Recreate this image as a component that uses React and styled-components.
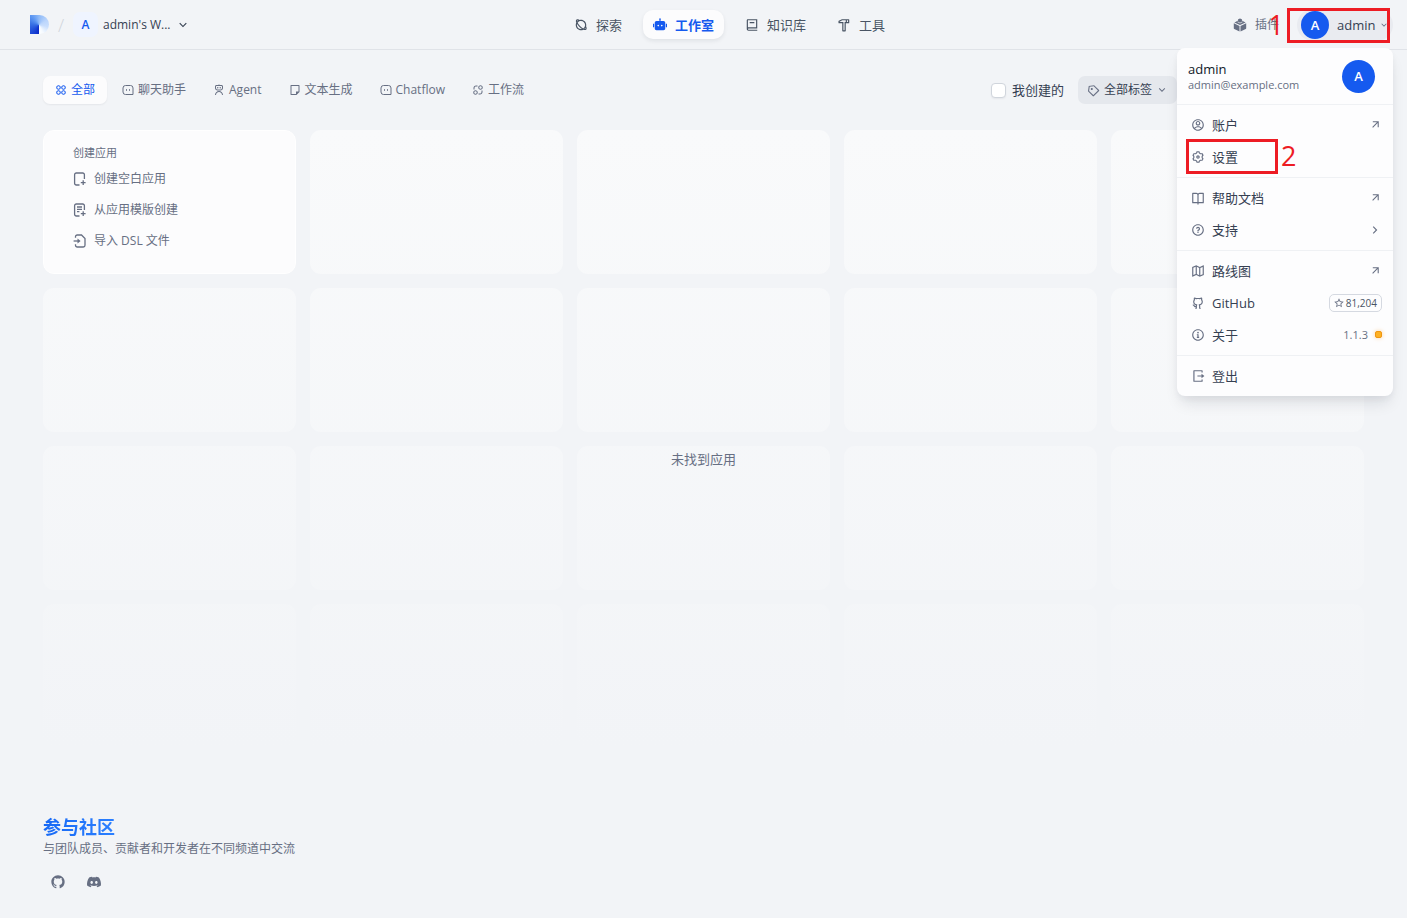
import React from "react";
import styled, { createGlobalStyle, css } from "styled-components";
import {
  RiPlanetLine,
  RiRobot2Fill,
  RiBook2Line,
  RiHammerLine,
  RiApps2Line,
  RiRobot3Line,
  RiFile4Line,
  RiExchange2Line,
  RiAccountCircleLine,
  RiSettings3Line,
  RiBookOpenLine,
  RiQuestionLine,
  RiMap2Line,
  RiGithubLine,
  RiInformation2Line,
  RiLogoutBoxRLine,
  RiArrowRightUpLine,
  RiArrowRightSLine,
  RiArrowDownSLine,
  RiStarLine,
  RiPriceTag3Line,
  RiGithubFill,
  RiDiscordFill,
} from "react-icons/ri";

const GlobalStyle = createGlobalStyle`
  *, *::before, *::after { box-sizing: border-box; }
  body {
    margin: 0;
    background: #f2f4f7;
    color: #354052;
    font-family: "Open Sans", "Noto Sans CJK SC", sans-serif;
    font-size: 13px;
    line-height: 20px;
  }
  button, input { font: inherit; color: inherit; }
  button { border: 0; background: none; padding: 0; cursor: pointer; white-space: nowrap; }
  a { color: inherit; text-decoration: none; }
  h1, h2, p, ul { margin: 0; padding: 0; }
  ul { list-style: none; }
  svg { display: block; flex: none; }
`;

const Page = styled.div`
  min-height: 100vh;
  display: flex;
  flex-direction: column;
`;

/* Header */
const Header = styled.header`
  display: flex;
  align-items: center;
  justify-content: space-between;
  height: 50px;
  padding: 0 14px 0 30px;
  border-bottom: 1px solid #e0e3e8;
`;

const HeaderStart = styled.div`
  display: flex;
  align-items: center;
  flex: 0 0 209px;
`;

const Logo = styled.span`
  width: 19px;
  height: 19px;
  border-radius: 0 10px 10px 0;
  background: conic-gradient(
    at 9px 10px,
    #8fbaf8 0deg,
    #bcd6fc 60deg,
    #c9defd 100deg,
    #f4f9ff 150deg,
    #ffffff 180deg,
    #0a2ac8 180deg,
    #1c47d6 220deg,
    #3b74e6 280deg,
    #5f98f2 320deg,
    #8fbaf8 360deg
  );
`;

const Slash = styled.span`
  width: 24px;
  text-align: center;
  font-size: 18px;
  font-weight: 300;
  color: #d0d5dc;
`;

const Workspace = styled.button`
  display: flex;
  align-items: center;
  gap: 5px;
  font-size: 12px;
`;

const WorkspaceMark = styled.span`
  width: 25px;
  height: 25px;
  border-radius: 7px;
  background: #eff4ff;
  color: #155aef;
  font-weight: 600;
  line-height: 25px;
`;

const Nav = styled.nav`
  display: flex;
  gap: 11px;
`;

const NavLink = styled.a`
  display: flex;
  align-items: center;
  gap: 8px;
  height: 29px;
  padding: 0 10px;
  border-radius: 10px;
  color: #495464;
  ${(p) =>
    p.$active &&
    css`
      background: #fcfcfd;
      color: #155aef;
      font-weight: 700;
      box-shadow: 0 2px 4px rgba(16, 24, 40, 0.08);
    `}
`;

const HeaderEnd = styled.div`
  display: flex;
  align-items: center;
  gap: 18px;
  padding-left: 13px;
`;

const PluginLink = styled.a`
  display: flex;
  align-items: center;
  gap: 8px;
  font-size: 12px;
  color: #676f83;
`;

const Account = styled.div`
  position: relative;
`;

const AccountButton = styled.button`
  display: flex;
  align-items: center;
  gap: 8px;
  height: 32px;
  width: 96px;
  padding: 0 4px;
  border-radius: 16px;
  background: #e9ebf0;

  svg {
    margin-left: -4px;
    color: #676f83;
  }
`;

const Avatar = styled.span`
  display: block;
  flex: none;
  width: ${(p) => p.$size}px;
  height: ${(p) => p.$size}px;
  border-radius: 50%;
  background: #155aef;
  color: #fff;
  font-size: 13px;
  font-weight: 600;
  line-height: ${(p) => p.$size}px;
  text-align: center;
`;

/* Account menu */
const Menu = styled.div`
  position: absolute;
  z-index: 10;
  top: 39px;
  right: 0;
  width: 216px;
  border-radius: 8px;
  background: #fdfdfe;
  box-shadow: 0 10px 16px -4px rgba(16, 24, 40, 0.12), 0 3px 6px rgba(16, 24, 40, 0.04);
`;

const Profile = styled.div`
  display: flex;
  align-items: center;
  justify-content: space-between;
  height: 56px;
  padding: 2px 18px 0 11px;
`;

const ProfileName = styled.p`
  line-height: 16px;
  color: #101828;
`;

const ProfileMail = styled.p`
  font-size: 11px;
  line-height: 16px;
  color: #676f83;
`;

const MenuGroup = styled.ul`
  padding: 4px;
  border-top: 1px solid #eff1f4;
`;

const MenuItem = styled.li`
  position: relative;
`;

const MenuLink = styled.a`
  display: flex;
  align-items: center;
  gap: 7px;
  height: 32px;
  padding: 0 7px 0 10px;
  color: #354052;

  svg { color: #676f83; }
`;

const MenuLabel = styled.span`
  flex: 1;
`;

const StarCount = styled.span`
  display: flex;
  align-items: center;
  gap: 2px;
  height: 18px;
  padding: 0 4px;
  border: 1px solid #d5d9e1;
  border-radius: 5px;
  font-size: 10px;
  color: #495464;
`;

const Version = styled.span`
  display: flex;
  align-items: center;
  gap: 7px;
  font-size: 11px;
  color: #676f83;

  &::after {
    content: "";
    width: 7px;
    height: 7px;
    border: 1px solid #f09510;
    border-radius: 2px;
    background: #fdb022;
    box-shadow: 0 0 4px rgba(247, 144, 9, 0.4);
  }
`;

/* Numbered callouts over the menu */
const Callout = styled.span`
  position: absolute;
  z-index: 11;
  top: ${(p) => p.$top}px;
  left: ${(p) => p.$left}px;
  width: ${(p) => p.$width}px;
  height: 35px;
  border: 3px solid #ed1c24;
  pointer-events: none;
`;

const CalloutNumber = styled.span`
  position: absolute;
  top: -4px;
  ${(p) => (p.$before ? "right" : "left")}: calc(100% + 6px);
  color: #ed1c24;
  font-size: 27px;
  line-height: 35px;
`;

/* Main area */
const Main = styled.main`
  padding: 26px 43px 0;
`;

const Toolbar = styled.div`
  display: flex;
  align-items: center;
  justify-content: space-between;
  height: 28px;
  margin-bottom: 26px;
`;

const Tabs = styled.div`
  display: flex;
  gap: 3px;
`;

const Tab = styled.button`
  display: flex;
  align-items: center;
  gap: 4px;
  height: 28px;
  padding: 0 12px;
  border-radius: 7px;
  font-size: 12px;
  color: #676f83;
  ${(p) =>
    p.$active &&
    css`
      background: #fcfcfd;
      color: #155aef;
      box-shadow: 0 1px 2px rgba(16, 24, 40, 0.06);
    `}
`;

const Filters = styled.div`
  display: flex;
  align-items: center;
  gap: 7px;
`;

const CheckLabel = styled.label`
  display: flex;
  align-items: center;
  gap: 6px;
  margin-right: 7px;
`;

const Checkbox = styled.input`
  appearance: none;
  width: 15px;
  height: 15px;
  margin: 0;
  border: 1px solid #d0d5dc;
  border-radius: 4px;
  background: #fff;
  box-shadow: 0 1px 2px rgba(16, 24, 40, 0.06);
`;

const TagButton = styled.button`
  display: flex;
  align-items: center;
  gap: 4px;
  height: 28px;
  width: 99px;
  padding: 0 9px;
  border-radius: 7px;
  background: #e5e8ed;
  font-size: 12px;

  svg { color: #676f83; }
`;

const TagIcon = styled(RiPriceTag3Line)`
  transform: scaleX(-1);
`;

const Search = styled.input`
  width: 180px;
  height: 28px;
  border: 0;
  border-radius: 7px;
  background: #e5e8ed;
`;

const Board = styled.section`
  position: relative;
  display: grid;
  grid-template-columns: repeat(5, 1fr);
  grid-auto-rows: 144px;
  gap: 14px;
`;

const EmptyCard = styled.div`
  border-radius: 11px;
  background: #f9fafb;
`;

const CreateCard = styled.div`
  position: relative;
  z-index: 2;
  display: flex;
  flex-direction: column;
  align-items: flex-start;
  gap: 1px;
  padding: 12px 29px;
  border: 1px solid #fff;
  border-radius: 11px;
  background: #fcfcfd;
  color: #676f83;
`;

const CreateTitle = styled.h2`
  font-size: 11px;
  font-weight: 400;
  line-height: 20px;
`;

const CreateButton = styled.button`
  display: flex;
  align-items: center;
  gap: 7px;
  height: 30px;
  font-size: 12px;
`;

const BoardFade = styled.div`
  position: absolute;
  z-index: 1;
  inset: 0;
  display: flex;
  align-items: center;
  justify-content: center;
  padding-top: 40px;
  background: linear-gradient(to bottom, rgba(242, 244, 247, 0), #f2f4f7);
  color: #676f83;
`;

/* Footer */
const Footer = styled.footer`
  margin-top: auto;
  padding: 0 43px 28px;
`;

const FooterTitle = styled.h2`
  width: max-content;
  font-size: 18px;
  font-weight: 700;
  line-height: 24px;
  background: linear-gradient(90deg, #1769f5, #2b7fff);
  background-clip: text;
  color: transparent;
`;

const FooterText = styled.p`
  font-size: 12px;
  color: #676f83;
`;

const Socials = styled.div`
  display: flex;
  gap: 20px;
  margin-top: 15px;
  padding-left: 7px;
  color: #676f83;
`;

function PluginIcon() {
  return (
    <svg width="14" height="14" viewBox="0 0 14 14" fill="currentColor" aria-hidden="true">
      <path d="M7 .4l1.900.9v1.300l2.200 1.100L12.600 4.400 7 7 1.400 4.400l1.500-.7 2.200-1.100V1.300z" />
      <path d="M.8 5.200l5.700 2.700v5.700L1.300 11a.9.9 0 0 1-.5-.8z" />
      <path d="M13.200 5.200L7.500 7.900v5.700L12.700 11a.9.9 0 0 0 .5-.8z" />
      <path d="M4.500 3.900L7 5l2.500-1.100" fill="none" stroke="#f2f4f7" strokeWidth=".7" />
    </svg>
  );
}

function ChatIcon() {
  return (
    <svg width="12" height="12" viewBox="0 0 12 12" fill="none" stroke="currentColor" aria-hidden="true">
      <path d="M3.500 1.500h5a2.500 2.500 0 0 1 2.500 2.500v6.500H3.500A2.500 2.500 0 0 1 1 8V4a2.500 2.500 0 0 1 2.500-2.500z" />
      <path d="M4.500 5.200v1.600M7.500 5.200v1.600" />
    </svg>
  );
}

function FileIcon({ kind }) {
  return (
    <svg width="14" height="14" viewBox="0 0 14 14" fill="none" stroke="currentColor" strokeWidth="1.300" aria-hidden="true">
      {kind === "import" ? (
        <>
          <path d="M2.500 3.800V2.700A1.700 1.700 0 0 1 4.200 1H8.500l3.500 3.500v6.800A1.700 1.700 0 0 1 10.300 13H4.200a1.700 1.700 0 0 1-1.700-1.700v-1.100" />
          <path d="M.6 7H5" />
          <path d="M4.500 4.500L7.600 7 4.500 9.500z" fill="currentColor" stroke="none" />
        </>
      ) : (
        <>
          <path d="M6.500 13H3.300a1.700 1.700 0 0 1-1.700-1.700V2.700A1.700 1.700 0 0 1 3.300 1h6.400a1.700 1.700 0 0 1 1.700 1.700V7" />
          <path d="M10.200 8.300v4.800M7.800 10.700h4.800" />
          {kind === "template" && <path d="M4 4h5M4 6.300h5M4 8.600h2.400" />}
        </>
      )}
    </svg>
  );
}

const navItems = [
  { label: "探索", icon: RiPlanetLine },
  { label: "工作室", icon: RiRobot2Fill, active: true },
  { label: "知识库", icon: RiBook2Line },
  { label: "工具", icon: RiHammerLine },
];

const tabs = [
  { label: "全部", icon: RiApps2Line, active: true },
  { label: "聊天助手", icon: ChatIcon },
  { label: "Agent", icon: RiRobot3Line },
  { label: "文本生成", icon: RiFile4Line },
  { label: "Chatflow", icon: ChatIcon },
  { label: "工作流", icon: RiExchange2Line },
];

const createItems = [
  { label: "创建空白应用", kind: "blank" },
  { label: "从应用模版创建", kind: "template" },
  { label: "导入 DSL 文件", kind: "import" },
];

const external = <RiArrowRightUpLine size={13} />;

const menuGroups = [
  [
    { label: "账户", icon: RiAccountCircleLine, end: external },
    { label: "设置", icon: RiSettings3Line, callout: "2" },
  ],
  [
    { label: "帮助文档", icon: RiBookOpenLine, end: external },
    { label: "支持", icon: RiQuestionLine, end: <RiArrowRightSLine size={14} /> },
  ],
  [
    { label: "路线图", icon: RiMap2Line, end: external },
    {
      label: "GitHub",
      icon: RiGithubLine,
      end: (
        <StarCount>
          <RiStarLine size={10} />
          81,204
        </StarCount>
      ),
    },
    { label: "关于", icon: RiInformation2Line, end: <Version>1.1.3</Version> },
  ],
  [{ label: "登出", icon: RiLogoutBoxRLine }],
];

function AccountMenu() {
  return (
    <Menu>
      <Profile>
        <div>
          <ProfileName>admin</ProfileName>
          <ProfileMail>admin@example.com</ProfileMail>
        </div>
        <Avatar $size={33}>A</Avatar>
      </Profile>
      {menuGroups.map((group) => (
        <MenuGroup key={group[0].label}>
          {group.map(({ label, icon: Icon, end, callout }) => (
            <MenuItem key={label}>
              <MenuLink href="#">
                <Icon size={14} />
                <MenuLabel>{label}</MenuLabel>
                {end}
              </MenuLink>
              {callout && (
                <Callout $top={-2} $left={5} $width={92}>
                  <CalloutNumber>{callout}</CalloutNumber>
                </Callout>
              )}
            </MenuItem>
          ))}
        </MenuGroup>
      ))}
    </Menu>
  );
}

export default function App() {
  return (
    <Page>
      <GlobalStyle />
      <Header>
        <HeaderStart>
          <Logo role="img" aria-label="Dify" />
          <Slash>/</Slash>
          <Workspace>
            <WorkspaceMark>A</WorkspaceMark>
            admin's W...
            <RiArrowDownSLine size={14} />
          </Workspace>
        </HeaderStart>
        <Nav>
          {navItems.map(({ label, icon: Icon, active }) => (
            <NavLink key={label} href="#" $active={active}>
              <Icon size={14} />
              {label}
            </NavLink>
          ))}
        </Nav>
        <HeaderEnd>
          <PluginLink href="#">
            <PluginIcon />
            插件
          </PluginLink>
          <Account>
            <AccountButton>
              <Avatar $size={28}>A</Avatar>
              admin
              <RiArrowDownSLine size={10} />
            </AccountButton>
            <Callout $top={-1} $left={-10} $width={103}>
              <CalloutNumber $before>1</CalloutNumber>
            </Callout>
            <AccountMenu />
          </Account>
        </HeaderEnd>
      </Header>

      <Main>
        <Toolbar>
          <Tabs>
            {tabs.map(({ label, icon: Icon, active }) => (
              <Tab key={label} $active={active}>
                <Icon size={12} />
                {label}
              </Tab>
            ))}
          </Tabs>
          <Filters>
            <CheckLabel>
              <Checkbox type="checkbox" />
              我创建的
            </CheckLabel>
            <TagButton>
              <TagIcon size={13} />
              全部标签
              <RiArrowDownSLine size={12} />
            </TagButton>
            <Search type="search" aria-label="搜索" />
          </Filters>
        </Toolbar>

        <Board>
          <CreateCard>
            <CreateTitle>创建应用</CreateTitle>
            {createItems.map(({ label, kind }) => (
              <CreateButton key={kind}>
                <FileIcon kind={kind} />
                {label}
              </CreateButton>
            ))}
          </CreateCard>
          {Array.from({ length: 19 }, (_, i) => (
            <EmptyCard key={i} />
          ))}
          <BoardFade>未找到应用</BoardFade>
        </Board>
      </Main>

      <Footer>
        <FooterTitle>参与社区</FooterTitle>
        <FooterText>与团队成员、贡献者和开发者在不同频道中交流</FooterText>
        <Socials>
          <a href="#" aria-label="GitHub">
            <RiGithubFill size={16} />
          </a>
          <a href="#" aria-label="Discord">
            <RiDiscordFill size={16} />
          </a>
        </Socials>
      </Footer>
    </Page>
  );
}
